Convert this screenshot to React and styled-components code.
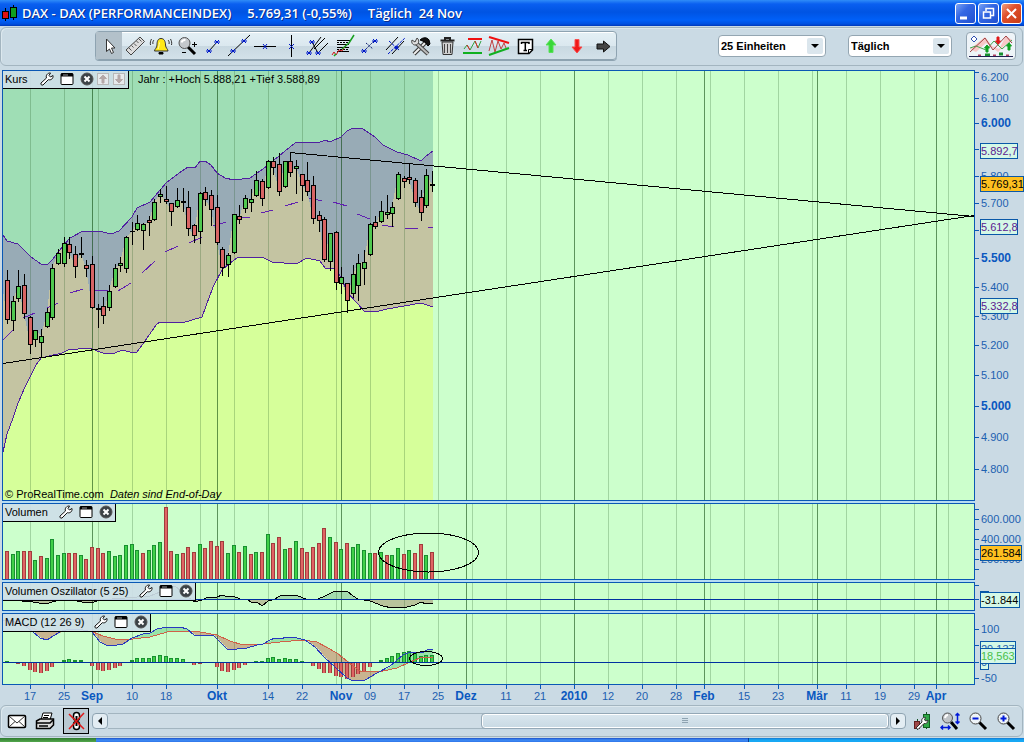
import React from "react";
import styled, { createGlobalStyle } from "styled-components";

/* ---------- data ---------- */

// one entry per trading day: [high, body top, body bottom, low, colour]
const candles = [
  [270, 280, 319, 323, "r"], [296, 301, 320, 330, "g"], [270, 286, 298, 301, "g"], [274, 285, 313, 318, "r"],
  [316, 317, 344, 353, "r"], [330, 330, 339, 346, "g"], [329, 336, 342, 357, "g"], [308, 312, 326, 327, "g"],
  [264, 268, 317, 319, "g"], [249, 253, 263, 264, "g"], [237, 243, 263, 266, "g"], [237, 244, 252, 258, "r"],
  [246, 254, 266, 277, "r"], [237, 253, 254, 257, "k"], [260, 265, 268, 276, "r"], [256, 264, 307, 308, "r"],
  [304, 308, 309, 327, "k"], [297, 306, 315, 323, "r"], [285, 291, 307, 310, "g"], [264, 268, 286, 287, "g"],
  [257, 263, 265, 271, "g"], [236, 237, 268, 272, "g"], [222, 231, 231, 244, "k"], [215, 223, 229, 230, "g"],
  [223, 224, 230, 249, "g"], [216, 220, 222, 235, "r"], [199, 202, 219, 220, "g"], [189, 194, 196, 202, "g"],
  [186, 199, 201, 203, "r"], [203, 203, 211, 225, "r"], [188, 200, 206, 207, "g"], [188, 201, 202, 211, "k"],
  [191, 207, 228, 235, "r"], [224, 225, 235, 242, "r"], [192, 193, 231, 243, "g"], [187, 192, 199, 205, "r"],
  [190, 195, 209, 225, "r"], [195, 207, 242, 244, "r"], [247, 249, 267, 275, "r"], [253, 255, 264, 276, "g"],
  [214, 214, 252, 253, "g"], [205, 216, 219, 223, "r"], [195, 198, 208, 212, "g"], [189, 199, 202, 211, "g"],
  [171, 180, 195, 196, "g"], [179, 181, 198, 205, "r"], [160, 161, 187, 188, "g"], [157, 161, 167, 174, "r"],
  [153, 164, 191, 195, "r"], [161, 161, 186, 187, "g"], [152, 161, 172, 176, "r"], [160, 166, 168, 193, "g"],
  [174, 174, 185, 200, "r"], [162, 180, 191, 195, "r"], [176, 185, 218, 223, "r"], [211, 215, 220, 231, "r"],
  [217, 219, 259, 261, "r"], [233, 233, 261, 270, "g"], [231, 232, 282, 289, "r"], [267, 277, 283, 293, "g"],
  [283, 283, 300, 312, "r"], [265, 274, 293, 297, "g"], [254, 263, 285, 300, "g"], [250, 262, 268, 284, "g"],
  [223, 224, 254, 255, "g"], [216, 222, 226, 228, "r"], [201, 211, 221, 222, "g"], [195, 212, 214, 218, "g"],
  [202, 207, 213, 226, "g"], [172, 174, 198, 199, "g"], [176, 178, 181, 187, "r"], [163, 177, 179, 183, "r"],
  [178, 180, 202, 206, "r"], [190, 197, 212, 220, "r"], [169, 175, 205, 207, "g"], [171, 184, 185, 191, "k"],
];

const upperBand = [
  [3, 235], [7, 241], [18, 244], [31, 257], [41, 264], [47, 265], [52, 260], [63, 246], [70, 238], [83, 231],
  [103, 232], [111, 234], [119, 231], [132, 217], [137, 208], [150, 202], [166, 183], [182, 171], [188, 167],
  [195, 168], [200, 161], [205, 161], [211, 165], [217, 173], [225, 178], [234, 180], [250, 178], [263, 169],
  [279, 156], [285, 151], [295, 143], [303, 142], [318, 143], [325, 140], [330, 142], [341, 137], [347, 131],
  [353, 128], [363, 129], [375, 137], [383, 145], [397, 152], [408, 155], [421, 161], [425, 157], [433, 151],
];

const lowerBand = [
  [3, 452], [7, 434], [13, 418], [18, 403], [25, 387], [30, 377], [36, 365], [41, 358], [62, 353], [68, 350],
  [89, 348], [103, 353], [115, 353], [122, 350], [130, 352], [137, 352], [145, 341], [156, 325], [160, 322],
  [182, 323], [202, 317], [213, 287], [222, 270], [230, 263], [237, 258], [262, 257], [272, 262], [296, 264],
  [307, 258], [320, 261], [325, 268], [335, 269], [341, 277], [347, 292], [357, 303], [364, 311], [375, 312],
  [387, 309], [421, 303], [433, 307],
];

const middleDashes = [
  [3, 340, 13, 330], [23, 318, 35, 313], [47, 308, 58, 303], [70, 293, 83, 289], [94, 290, 108, 291],
  [118, 291, 131, 283], [142, 273, 155, 261], [165, 252, 178, 246], [189, 243, 202, 237], [213, 226, 226, 222],
  [237, 217, 250, 217], [261, 213, 273, 210], [285, 206, 298, 202], [309, 198, 322, 201], [333, 202, 347, 206],
  [357, 214, 370, 219], [382, 225, 394, 227], [405, 228, 418, 229], [428, 227, 433, 227],
];

const volumeTops = [
  551, 554, 551, 551, 551, 560, 556, 558, 539, 555, 553, 553, 553, 555, 559, 547, 548, 553, 551, 556, 555, 545,
  544, 550, 553, 550, 545, 542, 507, 551, 554, 553, 547, 552, 544, 548, 541, 546, 541, 553, 545, 552, 546, 554,
  552, 552, 534, 543, 537, 549, 548, 541, 548, 552, 547, 543, 528, 537, 542, 549, 543, 547, 544, 550, 553, 553,
  552, 555, 555, 548, 554, 550, 553, 544, 555, 552,
];
const volumeColors =
  "rggrrgrggggrrgrrrrggggggrgggrrgrrrgrrrrggrgrgrgrrgrgrrrrrgrgrggggrgrggrgrrgr";

const macdBars = [
  1, -1, -2, -4, -8, -10, -11, -9, -5, -1, 2, 3, 2, 2, 0, -4, -8, -9, -8, -6, -4, 0, 2, 4, 4, 4, 6, 7, 6, 4, 4,
  3, 0, -3, -2, -1, -1, -5, -9, -10, -8, -6, -3, -1, 1, 1, 4, 5, 3, 4, 3, 3, 1, -1, -4, -7, -11, -11, -14, -15,
  -17, -15, -12, -10, -5, -1, 2, 4, 6, 9, 10, 11, 9, 6, 7, 7,
];

const macdLine = [
  [3, 620], [20, 622], [32, 631], [40, 638], [47, 640], [53, 636], [62, 631], [70, 629], [83, 630], [92, 632],
  [100, 642], [106, 645], [117, 645], [123, 644], [132, 638], [143, 634], [150, 633], [157, 629], [167, 627],
  [173, 628], [180, 627], [187, 629], [194, 635], [207, 635], [213, 635], [220, 642], [227, 649], [237, 649],
  [247, 648], [257, 645], [263, 644], [270, 640], [275, 638], [280, 639], [287, 637], [297, 638], [305, 640],
  [315, 647], [324, 657], [335, 667], [347, 678], [353, 681], [365, 680], [377, 673], [390, 666], [403, 655],
  [410, 652], [422, 653], [427, 650], [433, 649],
];

const signalLine = [
  [3, 620], [28, 626], [37, 630], [50, 632], [70, 631], [93, 632], [103, 636], [115, 639], [133, 639],
  [150, 637], [167, 632], [182, 631], [200, 632], [217, 635], [230, 641], [243, 645], [263, 644], [280, 642],
  [303, 640], [317, 642], [337, 653], [348, 662], [360, 671], [370, 671], [383, 671], [397, 668], [410, 662],
  [420, 658], [433, 657],
];

const oscillator = [
  [3, 600], [22, 601], [33, 602], [39, 603], [46, 604], [52, 602], [60, 600], [77, 601], [87, 603], [94, 602],
  [100, 600], [125, 598], [150, 596], [175, 586], [188, 597], [194, 602], [202, 600], [208, 597], [217, 597],
  [222, 595], [228, 597], [233, 596], [240, 599], [247, 599], [252, 603], [257, 602], [262, 606], [268, 601],
  [275, 599], [280, 596], [291, 595], [298, 596], [306, 599], [318, 599], [325, 596], [335, 591], [347, 591],
  [353, 596], [358, 599], [370, 601], [383, 606], [392, 608], [407, 607], [415, 605], [421, 602], [426, 604],
  [433, 603],
];

// time axis: x position, label, month start
const dates = [
  [30, "17"], [64, "25"], [92, "Sep", true], [98, ""], [132, "10"], [166, "18"], [200, ""], [217, "Okt", true],
  [234, ""], [268, "14"], [302, "22"], [336, ""], [341, "Nov", true], [370, "09"], [404, "17"], [438, "25"],
  [466, "Dez", true], [472, ""], [506, "11"], [540, "21"], [574, "2010", true], [608, "12"], [642, "20"],
  [676, "28"], [704, "Feb", true], [710, ""], [744, "15"], [778, "23"], [812, ""], [817, "Mär", true],
  [846, "11"], [880, "19"], [914, "29"], [936, "Apr", true], [948, ""],
];

const barX = (i) => Math.floor(30.2 + ((i - 4) * 17) / 3);
const points = (list) => list.map((p) => p.join(",")).join(" ");
const closes = candles.map(([, top, bottom, , c], i) => [barX(i), c === "r" ? bottom : top]);

const valueAt = (line, x) => {
  const i = line.findIndex((p) => p[0] >= x);
  if (i < 1) return line[i < 0 ? line.length - 1 : 0][1];
  const [x0, y0] = line[i - 1];
  const [x1, y1] = line[i];
  return y0 + ((y1 - y0) * (x - x0)) / (x1 - x0);
};

/* ---------- layout ---------- */

const GlobalStyle = createGlobalStyle`
  * {
    box-sizing: border-box;
  }

  body {
    margin: 0;
    background: #cadae4;
    font-family: "Liberation Sans", Arial, sans-serif;
    font-size: 11px;
    color: #000;
  }

  button, select {
    font: inherit;
    color: inherit;
    padding: 0;
    margin: 0;
  }
`;

const Page = styled.div`
  display: flex;
  flex-direction: column;
  overflow: hidden;
`;

const TitleBar = styled.header`
  height: 26px;
  display: flex;
  align-items: center;
  gap: 2px;
  padding: 0 2px;
  background: linear-gradient(#2f8cf8 0, #0a5ff0 4px, #0054e3 12px, #0060f8 20px, #0050e0 24px, #0038b8 26px);
`;

const Title = styled.h1`
  flex: 1;
  display: flex;
  gap: 16px;
  margin: 0 0 0 2px;
  font-family: "Open Sans", sans-serif;
  font-size: 13px;
  font-weight: 600;
  line-height: 16px;
  white-space: pre;
  color: #fff;
  text-shadow: 1px 1px 0 #0a2c8c;
`;

const WindowButton = styled.button`
  width: 21px;
  height: 21px;
  border: 1px solid #fff;
  border-radius: 3px;
  background: ${(props) =>
    props.$close
      ? "linear-gradient(135deg, #f0a080, #e0502c 40%, #c83c14)"
      : "linear-gradient(135deg, #7aa2f4, #3468e4 40%, #2050d0)"};

  svg {
    display: block;
  }
`;

const ToolBar = styled.div`
  height: 39px;
  margin: 1px 1px 4px 0;
  padding: 0 6px 2px 94px;
  display: flex;
  align-items: center;
  border: 1px solid #a3b5c0;
  border-radius: 6px;
  box-shadow: inset 1px 1px 0 #dce8ee;
`;

const ToolGroup = styled.div`
  display: flex;
  height: 29px;
  margin-right: auto;
  border: 1px solid #8ea3b1;
  border-radius: 4px;
  background: linear-gradient(#e4f0f5 0, #dbe8ef 50%, #c8d8e1 51%, #d3e1e9 100%);
  box-shadow: 0 1px 0 #8ea3b1, inset 1px 1px 0 #fff;
`;

const ToolButton = styled.button`
  width: 26px;
  border: none;
  display: grid;
  place-items: center;
  background: ${(props) => (props.$active ? "#b3c1ca" : "transparent")};
`;

const SelectBox = styled.label`
  position: relative;
  width: ${(props) => props.$width}px;
  margin-right: 22px;

  select {
    appearance: none;
    display: block;
    width: 100%;
    height: 22px;
    padding-left: 2px;
    border: 1px solid #94a6b2;
    border-radius: 4px;
    background: #fff;
    font-weight: bold;
    outline: none;
  }

  svg {
    position: absolute;
    right: 2px;
    top: 2px;
    pointer-events: none;
  }
`;

const IndicatorButton = styled.button`
  width: 50px;
  height: 28px;
  margin-left: -8px;
  border: 1px solid #94a6b2;
  border-radius: 4px;
  background: #eef4f8;
  display: grid;
  place-items: center;
`;

const Charts = styled.main`
  display: flex;
  flex-direction: column;
  gap: 2px;
  padding-left: 2px;
`;

const Panel = styled.section`
  display: grid;
  grid-template-columns: 1fr 49px;
`;

const Plot = styled.div`
  position: relative;
  border: 1px solid #0a58b4;
  background: #ccffcc;
  box-shadow: 0 2px 0 ${(props) => (props.$last ? "transparent" : "#b5dcf3")};
`;

const PlotSvg = styled.svg`
  display: block;
  width: 100%;
  height: ${(props) => props.$height}px;
`;

const AxisSvg = styled.svg`
  display: block;
  width: 49px;
  height: ${(props) => props.$height}px;
  overflow: visible;
`;

const TimeSvg = styled.svg`
  display: block;
  width: 100%;
  height: 20px;
  overflow: visible;
`;

const TimeAxis = styled.div`
  margin: -2px 50px 0 1px;
`;

const PanelTop = styled.div`
  position: absolute;
  top: 0;
  left: 0;
  display: flex;
  align-items: center;
  gap: 9px;
  line-height: 16px;
  white-space: pre;
`;

const PanelHead = styled.div`
  display: flex;
  align-items: center;
  width: ${(props) => props.$width}px;
  height: 18px;
  padding: 0 2px 1px;
  background: rgba(206, 222, 232, 0.92);
  border: solid #000;
  border-width: 0 1px 1px 0;
`;

const PanelTitle = styled.h2`
  flex: 1;
  margin: 0;
  font-size: 11px;
  font-weight: normal;
`;

const HeadButton = styled.button`
  width: 14px;
  height: 14px;
  margin-left: ${(props) => (props.$tight ? "2px" : "6px")};
  border: none;
  background: none;

  svg {
    display: block;
  }
`;

const HeadNote = styled.span`
  align-self: flex-start;
`;

const Credits = styled.p`
  position: absolute;
  left: 2px;
  bottom: 0;
  margin: 0;
  line-height: 12px;
  white-space: pre;
`;

const BottomBar = styled.footer`
  height: 32px;
  margin-right: 1px;
  padding: 0 6px;
  display: flex;
  align-items: center;
  border: 1px solid #a3b5c0;
  border-radius: 6px;
  box-shadow: inset 1px 1px 0 #dce8ee;
`;

const BarButton = styled.button`
  width: ${(props) => (props.$framed ? 26 : 20)}px;
  height: ${(props) => (props.$framed ? 26 : 20)}px;
  margin-right: ${(props) => (props.$framed ? 3 : 8)}px;
  display: grid;
  place-items: center;
  border: ${(props) => (props.$framed ? "1px solid #000" : "none")};
  background: ${(props) => (props.$framed ? "#b9c8d1" : "none")};

  &:last-child {
    margin-right: 0;
  }
`;

const ArrowButton = styled.button`
  width: 16px;
  height: 16px;
  border: 1px solid #8ea3b1;
  border-radius: 4px;
  background: #e3edf3;
  display: grid;
  place-items: center;
`;

const ScrollTrack = styled.div`
  flex: 1;
  height: 16px;
  display: flex;
  justify-content: flex-end;
  padding-right: 2px;
  border: solid #a3b5c0;
  border-width: 1px 0;
  background: #cfdde6;
`;

const ScrollThumb = styled.div`
  width: 52%;
  height: 14px;
  display: grid;
  place-items: center;
  border: 1px solid #fff;
  border-radius: 3px;
  outline: 1px solid #94a8b6;
  background: linear-gradient(#d9e6ee, #c9dae4);
`;

const BarTools = styled.div`
  display: flex;
  margin-left: 6px;
`;

const TaskStrip = styled.div`
  height: 4px;
  margin-top: 1px;
  display: flex;
  background: linear-gradient(#1c50c8 0, #3f8cf4 2px, #2f76ea 4px);
  justify-content: space-between;
`;

const StartEdge = styled.div`
  width: 96px;
  background: linear-gradient(#2f7a30, #53a84c);
`;

const TrayEdge = styled.div`
  width: 27%;
  border-left: 1px solid #0a3c90;
  background: linear-gradient(#1478d0, #18a8f4 2px);
`;

/* ---------- icons ---------- */

const Icon = ({ children, w = 24, h = 24 }) => (
  <svg width={w} height={h} viewBox={`0 0 ${w} ${h}`} fill="none" stroke="#000" aria-hidden="true">
    {children}
  </svg>
);

const Cross = ({ x, y }) => (
  <path d={`M${x - 2} ${y - 2}L${x + 2} ${y + 2}M${x - 2} ${y + 2}L${x + 2} ${y - 2}M${x - 3} ${y}H${x + 3}`} stroke="#0018c8" />
);

const tools = [
  ["Zeiger", <path d="M9.500 5V17.500L12.500 15L14.500 19.500L16.500 18.500L14.500 14H18Z" fill="#fff" stroke="#333" />],
  ["Lineal", (
    <>
      <path d="M3 16L17 3L21.500 7.500L8 21Z" fill="#ddd" stroke="#444" />
      <path d="M6 14l2.500 2.500M8.500 11.500l2 2M11 9.500l2.500 2.500M13.500 7l2 2M16 5l2.500 2.500" stroke="#555" />
    </>
  )],
  ["Alarm", (
    <>
      <path d="M12 4.500C8.500 4.500 8 8 8 11C8 14 5.500 15 5.500 17H19C19 15 16.500 14 16.500 11C16.500 8 15.500 4.500 12 4.500Z" fill="#ffe818" stroke="#333" />
      <path d="M10.500 8.500C10 11 10 13 9 15" stroke="#fffcc0" />
      <path d="M5 6C4 7 3.500 8.500 4 10M2.500 5C1.500 7 1 8.500 1.500 11M19 6C20 7 20.500 8.500 20 10M21.500 5C22.500 7 23 8.500 22.500 11" stroke="#333" />
      <path d="M10 18.500H14V20H10Z" fill="#000" />
    </>
  )],
  ["Lupe", (
    <>
      <path d="M13 13L20 20" strokeWidth="3" />
      <circle cx="9.500" cy="9" r="5.500" fill="#c4c8cc" stroke="#555" />
      <path d="M6.500 8.500Q7.500 5.500 10.500 6" stroke="#fff" strokeWidth="2" />
      <path d="M17 10.500H22M19.500 8V13M7 18.500H11" />
    </>
  )],
  ["Segment", <><path d="M8 17L16 8" /><Cross x={8} y={17} /><Cross x={16} y={8} /></>],
  ["Gerade", <><path d="M1 22L23 1" /><Cross x={6} y={17} /><Cross x={17} y={7} /></>],
  ["Horizontale", <><path d="M1 12.500H23" /><path d="M10 10L14 15M14 10L10 15" stroke="#0018c8" /></>],
  ["Vertikale", <><path d="M12.500 1V23" /><path d="M10 10L15 15M15 10L10 15" stroke="#0018c8" /></>],
  ["Pitchfork", (
    <>
      <path d="M4 19L16 3M9 15L20 4M13 19L23 9M7 8L13 19" />
      <Cross x={4} y={19} /><Cross x={13} y={19} /><Cross x={7} y={8} />
    </>
  )],
  ["Fibonacci", (
    <>
      <path d="M6 6.500H20M6 10.500H18M6 13.500H18M6 17.500H18" strokeWidth="1" />
      <path d="M6 8.500H17M6 15.500H17" strokeDasharray="2 1" />
      <path d="M1 21L3 18L5 21L8 16L11 17L15 11" stroke="#d01818" />
      <path d="M3 22L5 20M11 15L18 9L23 1" stroke="#18a020" strokeWidth="1.500" />
    </>
  )],
  ["Fächer", (
    <>
      <path d="M7 17L18 6M9 9L16 15" strokeDasharray="2 1" stroke="#102070" />
      <Cross x={7} y={17} /><Cross x={18} y={7} />
    </>
  )],
  ["Kanal", (
    <>
      <path d="M3 16L15 3M9 20L21 7" />
      <path d="M5 20L22 4M6 7L16 16" stroke="#0018c8" strokeDasharray="3 1" />
      <circle cx="13.500" cy="13.500" r="1.500" fill="#0018c8" stroke="#0018c8" />
    </>
  )],
  ["Werkzeug", (
    <>
      <path d="M5 20L17 8" stroke="#333" strokeWidth="4" />
      <path d="M5 20L16 9" stroke="#eee" strokeWidth="2" />
      <path d="M11 6C14 3 18 3 20 6L21 10L19 12L16 8Z" fill="#111" />
      <path d="M6 8L19 20" stroke="#444" strokeWidth="4" />
      <path d="M6 8L19 20" stroke="#bbb" strokeWidth="2" />
      <path d="M3 6L6 8L8 4C11 6 10 11 6 11C4 11 2 9 3 6Z" fill="#ddd" stroke="#444" />
    </>
  )],
  ["Löschen", (
    <>
      <path d="M7 8H18L17 20.500H8Z" fill="#d0d0d0" stroke="#333" />
      <path d="M5.500 6.500H19.500M10 6V4H15V6" stroke="#222" strokeWidth="2" />
      <path d="M9.500 10V19M12.500 10V19M15.500 10V19" stroke="#444" />
    </>
  )],
  ["Unterstützung", (
    <>
      <path d="M3 15L6 11L9 16L14 7L17 14L20 7" stroke="#30a040" />
      <path d="M6 11L9 16M14 7L17 14" stroke="#e02020" />
      <path d="M7 5H21" stroke="#f01010" strokeWidth="2" />
      <path d="M2 19H21" stroke="#10b020" strokeWidth="2" />
    </>
  )],
  ["Dreieck", (
    <>
      <path d="M2 17L5 6L8 18L11 7L14 15L17 9L19 14" stroke="#c04040" />
      <path d="M2 3L22 9" stroke="#f01010" strokeWidth="2" />
      <path d="M2 21L22 14" stroke="#10b020" strokeWidth="2" />
    </>
  )],
  ["Text", (
    <>
      <path d="M5.500 5.500H19.500V16L16 19.500H5.500Z" fill="#fff" strokeWidth="1.500" />
      <path d="M8.500 10V8.500H16V10M12.300 8.500V16M10.500 16.500H14" strokeWidth="1.500" />
      <path d="M19 15.500H15.500V19" />
    </>
  )],
  ["Pfeil hoch", <path d="M12 5L17 11H14V18.500H10V11H7Z" fill="#38d838" stroke="#58e058" />],
  ["Pfeil runter", <path d="M12 19L17 13H14V5.500H10V13H7Z" fill="#f01818" stroke="#f85050" />],
  ["Pfeil rechts", <path d="M19 12.500L12.500 7V10H6V15H12.500V18Z" fill="#444" stroke="#111" />],
];

const Wrench = () => (
  <Icon w={14} h={14}>
    <path d="M1 11L6.500 6C5.500 3.500 7.500 0.800 10.500 1L9 3.500L10.500 5L13 3.500C13.500 6.500 11 8.500 8.300 7.700L3 13C1.500 13.500 0.500 12.500 1 11Z" fill="#fff" stroke="#111" />
  </Icon>
);

const WindowIcon = () => (
  <Icon w={14} h={14}>
    <rect x="1" y="1.500" width="12" height="11" rx="1" fill="#fff" />
    <path d="M1 3H13" strokeWidth="3" />
    <path d="M3 3H8" stroke="#999" />
  </Icon>
);

const CloseIcon = () => (
  <Icon w={14} h={14}>
    <circle cx="7" cy="7" r="6" fill="#3c4246" stroke="#555" />
    <path d="M4.500 4.500L9.500 9.500M9.500 4.500L4.500 9.500" stroke="#fff" strokeWidth="2" />
  </Icon>
);

const MoveIcon = ({ down }) => (
  <Icon w={14} h={14}>
    <rect x="1.500" y="1.500" width="11" height="11" fill="#e6eaec" stroke="#b8b8b8" />
    <path d={down ? "M7 11L3.500 7.500H6V3H8V7.500H10.500Z" : "M7 3L3.500 6.500H6V11H8V6.500H10.500Z"} fill="#b4a8a8" stroke="#b4a8a8" />
  </Icon>
);

const DropArrow = () => (
  <svg width="18" height="18" viewBox="0 0 18 18" aria-hidden="true">
    <rect x="1" y="1" width="16" height="16" rx="2" fill="#dbe6ed" />
    <path d="M5 7H13L9 11Z" fill="#000" />
  </svg>
);

/* ---------- chart parts ---------- */

const Grid = ({ top, height }) =>
  dates.map(([x, , major]) => (
    <rect key={x} x={x} y={top} width="1" height={height} fill={major ? "#003c00" : "#205820"} fillOpacity={major ? 0.55 : 0.25} />
  ));

const ChartPlot = ({ top, height, label, children }) => (
  <PlotSvg
    $height={height}
    viewBox={`3 ${top} 971 ${height}`}
    preserveAspectRatio="none"
    shapeRendering="crispEdges"
    role="img"
    aria-label={label}
  >
    {children}
  </PlotSvg>
);

const Axis = ({ top, height, ticks, labels }) => (
  <AxisSvg $height={height}>
    {ticks.map((y) => (
      <rect key={y} x="0" y={y - top} width="4" height="1" fill="#0a58b4" />
    ))}
    {labels.map(({ y, text, bold, width, fill = "#d5f8e6", color = "#1c60b0" }) => (
      <g key={text}>
        {width && (
          <rect x="5.500" y={y - top - 7.500} width={width} height="15" fill={fill} stroke="#0a58a8" shapeRendering="crispEdges" />
        )}
        <text
          x="6"
          y={y - top + 4}
          fontSize={bold ? 12 : 11}
          fontWeight={bold ? "bold" : "normal"}
          fill={bold ? "#0a58c0" : color}
        >
          {text}
        </text>
      </g>
    ))}
  </AxisSvg>
);

const Head = ({ title, width, movable }) => (
  <PanelHead $width={width}>
    <PanelTitle>{title}</PanelTitle>
    <HeadButton aria-label="Einstellungen"><Wrench /></HeadButton>
    <HeadButton aria-label="Fenster"><WindowIcon /></HeadButton>
    <HeadButton aria-label="Schließen"><CloseIcon /></HeadButton>
    {movable && (
      <>
        <HeadButton $tight aria-label="Nach oben"><MoveIcon /></HeadButton>
        <HeadButton $tight aria-label="Nach unten"><MoveIcon down /></HeadButton>
      </>
    )}
  </PanelHead>
);

const candleFill = { r: "#d86464", g: "#50c850", k: "#000" };

const Candle = ({ x, data: [high, top, bottom, low, c] }) => (
  <g>
    <rect x={x} y={high} width="1" height={low - high + 1} fill="#000" />
    <rect x={x - 2} y={top} width="5" height={Math.max(bottom - top + 1, 1)} fill="#000" />
    {bottom - top > 1 && <rect x={x - 1} y={top + 1} width="3" height={bottom - top - 1} fill={candleFill[c]} />}
  </g>
);

const Bar = ({ x, y, height, color }) => (
  <g>
    <rect x={x - 2} y={y} width="4" height={height} fill={color === "r" ? "#a03c3c" : "#189030"} />
    {height > 2 && (
      <rect x={x - 1} y={y + 1} width="2" height={height - 1} fill={color === "r" ? "#e06464" : "#40d048"} />
    )}
  </g>
);

const PriceChart = () => (
  <ChartPlot top={71} height={429} label="Kurs">
    <rect x="3" y="71" width="430" height="429" fill="#d6ff9a" />
    <polygon points={`3,71 ${points(upperBand)} 433,71`} fill="#9fdeb5" />
    <polygon points={points([...upperBand, ...[...lowerBand].reverse()])} fill="#98abb6" />
    <polygon points={points([[3, 290], ...closes, [433, 184], ...[...lowerBand].reverse()])} fill="#c4c4a2" />
    <Grid top={71} height={429} />
    <polyline points={points(upperBand)} fill="none" stroke="#5020a0" />
    <polyline points={points(lowerBand)} fill="none" stroke="#5020a0" />
    {middleDashes.map(([x1, y1, x2, y2]) => (
      <line key={x1} x1={x1} y1={y1} x2={x2} y2={y2} stroke="#6020b0" />
    ))}
    {candles.map((data, i) => (
      <Candle key={i} x={barX(i)} data={data} />
    ))}
    <path d="M3 363.500L974 215.500M290 152.500L974 216.500" stroke="#000" fill="none" />
  </ChartPlot>
);

const VolumeChart = () => (
  <ChartPlot top={504} height={75} label="Volumen">
    <Grid top={504} height={75} />
    {volumeTops.map((y, i) => (
      <Bar key={i} x={barX(i)} y={y} height={579 - y} color={volumeColors[i]} />
    ))}
    <ellipse cx="428.500" cy="552.500" rx="50" ry="19.500" fill="none" stroke="#000" />
  </ChartPlot>
);

const OscillatorChart = () => (
  <ChartPlot top={583} height={27} label="Volumen Oszillator">
    <defs>
      <clipPath id="above"><rect x="3" y="583" width="971" height="16" /></clipPath>
      <clipPath id="below"><rect x="3" y="599" width="971" height="11" /></clipPath>
    </defs>
    <polygon points={`3,599 ${points(oscillator)} 433,599`} fill="#a4dcae" clipPath="url(#above)" />
    <polygon points={`3,599 ${points(oscillator)} 433,599`} fill="#b8c49c" clipPath="url(#below)" />
    <Grid top={583} height={27} />
    <polyline points={points(oscillator)} fill="none" stroke="#000" />
    <rect x="3" y="599" width="971" height="1" fill="#0030a0" />
  </ChartPlot>
);

const MacdChart = () => (
  <ChartPlot top={614} height={70} label="MACD">
    {Array.from({ length: 215 }, (_, i) => 3 + i * 2).map((x) => {
      const macd = valueAt(macdLine, x);
      const signal = valueAt(signalLine, x);
      return (
        <rect
          key={x}
          x={x}
          y={Math.min(macd, signal)}
          width="2"
          height={Math.abs(macd - signal)}
          fill={macd > signal ? "#c8b490" : "#98e4a8"}
        />
      );
    })}
    <Grid top={614} height={70} />
    {macdBars.map(
      (v, i) => v !== 0 && (
        <Bar key={i} x={barX(i)} y={v > 0 ? 662 - v : 662} height={Math.abs(v)} color={v > 0 ? "g" : "r"} />
      )
    )}
    <polyline points={points(signalLine)} fill="none" stroke="#d06048" />
    <polyline points={points(macdLine)} fill="none" stroke="#2838c0" />
    <rect x="3" y="662" width="971" height="1" fill="#0030a0" />
    <ellipse cx="426" cy="658.500" rx="16.500" ry="7" fill="none" stroke="#000" />
  </ChartPlot>
);

const purple = "#5c2090";

const priceLabels = [
  { y: 77, text: "6.200" }, { y: 98, text: "6.100" }, { y: 123, text: "6.000", bold: true },
  { y: 151, text: "5.892,7", width: 37, color: purple },
  { y: 176, text: "5.800" },
  { y: 184, text: "5.769,31", width: 43, fill: "#ffc020", color: "#000" },
  { y: 203, text: "5.700" },
  { y: 227, text: "5.612,8", width: 37, color: purple },
  { y: 258, text: "5.500", bold: true }, { y: 287, text: "5.400" }, { y: 316, text: "5.300" },
  { y: 306, text: "5.332,8", width: 37, color: purple },
  { y: 345, text: "5.200" }, { y: 375, text: "5.100" }, { y: 406, text: "5.000", bold: true },
  { y: 437, text: "4.900" }, { y: 469, text: "4.800" },
];

const App = () => (
  <Page>
    <GlobalStyle />
    <TitleBar>
      <Icon w={16} h={18}>
        <path d="M3.500 4V17M11.500 1V16" />
        <rect x="0.500" y="7.500" width="6" height="7" fill="#e01010" />
        <rect x="8.500" y="3.500" width="6" height="10" fill="#10a020" />
      </Icon>
      <Title>
        <span>DAX - DAX (PERFORMANCEINDEX)</span>
        <span>5.769,31 (-0,55%)</span>
        <span>Täglich  24 Nov</span>
      </Title>
      <WindowButton aria-label="Minimieren">
        <Icon w={19} h={19}><path d="M4 14H11" stroke="#fff" strokeWidth="3" /></Icon>
      </WindowButton>
      <WindowButton aria-label="Wiederherstellen">
        <Icon w={19} h={19}>
          <path d="M7 7V4.500H14.500V11.500H12" stroke="#fff" strokeWidth="1.500" />
          <rect x="4.500" y="8" width="7" height="6" stroke="#fff" strokeWidth="1.500" />
        </Icon>
      </WindowButton>
      <WindowButton $close aria-label="Schließen">
        <Icon w={19} h={19}><path d="M5 5L14 14M14 5L5 14" stroke="#fff" strokeWidth="2" /></Icon>
      </WindowButton>
    </TitleBar>

    <ToolBar>
      <ToolGroup>
        {tools.map(([name, drawing], i) => (
          <ToolButton key={name} $active={i === 0} aria-label={name}>
            <Icon>{drawing}</Icon>
          </ToolButton>
        ))}
      </ToolGroup>
      <SelectBox $width={108}>
        <select aria-label="Einheiten" defaultValue="25">
          <option value="25">25 Einheiten</option>
        </select>
        <DropArrow />
      </SelectBox>
      <SelectBox $width={104}>
        <select aria-label="Zeitraum" defaultValue="d">
          <option value="d">Täglich</option>
        </select>
        <DropArrow />
      </SelectBox>
      <IndicatorButton aria-label="Indikatoren">
        <Icon w={46} h={24}>
          <path d="M2 15L17 3L24 12L31 15L38 2L44 6L36 12L30 18L18 9L8 18Z" fill="#f8c8c8" stroke="none" />
          <path d="M2 14L8 12L18 16L26 7L34 15L44 6" stroke="#40a850" />
          <path d="M2 18L17 4L25 16L38 2L44 9" stroke="#a04040" />
          <path d="M6 2L9 5L6 8L3 5Z" fill="#fff" stroke="#3050b0" />
          <path d="M19 11L21.500 14H20V18H18V14H16.500ZM41 9L43.500 12H42V16H40V12H38.500Z" fill="#10a020" stroke="#10a020" />
          <path d="M30 10L32.500 7H31V3H29V7H27.500Z" fill="#e01818" stroke="#e01818" />
          <path d="M10 21.500H13M25 21.500H28M38 21.500H41" stroke="#b04060" strokeWidth="2" />
          <path d="M17 21H22M31 20H35" stroke="#189030" strokeWidth="3" />
          <path d="M1 22.500H45" stroke="#202050" />
        </Icon>
      </IndicatorButton>
    </ToolBar>

    <Charts>
      <Panel>
        <Plot>
          <PriceChart />
          <PanelTop>
            <Head title="Kurs" width={126} movable />
            <HeadNote>Jahr : +Hoch 5.888,21 +Tief 3.588,89</HeadNote>
          </PanelTop>
          <Credits>
            © ProRealTime.com  <i>Daten sind End-of-Day</i>
          </Credits>
        </Plot>
        <Axis
          top={70}
          height={431}
          ticks={[72, 98, 123, 149, 176, 203, 230, 258, 287, 316, 345, 375, 406, 437, 469]}
          labels={priceLabels}
        />
      </Panel>
      <Panel>
        <Plot>
          <VolumeChart />
          <PanelTop><Head title="Volumen" width={113} /></PanelTop>
        </Plot>
        <Axis
          top={503}
          height={77}
          ticks={[509, 519, 529, 539, 549, 559, 569]}
          labels={[
            { y: 519, text: "600.000" }, { y: 539, text: "400.000" }, { y: 559, text: "200.000" },
            { y: 553, text: "261.584", width: 41, fill: "#ffc020", color: "#000" },
          ]}
        />
      </Panel>
      <Panel>
        <Plot>
          <OscillatorChart />
          <PanelTop><Head title="Volumen Oszillator (5 25)" width={193} /></PanelTop>
        </Plot>
        <Axis
          top={582}
          height={29}
          ticks={[585, 599]}
          labels={[
            { y: 599, text: "0", width: 8 },
            { y: 600, text: "-31.844", width: 39, color: "#000" },
          ]}
        />
      </Panel>
      <Panel>
        <Plot $last>
          <MacdChart />
          <PanelTop><Head title="MACD (12 26 9)" width={148} /></PanelTop>
        </Plot>
        <Axis
          top={613}
          height={72}
          ticks={[629, 645, 662, 678]}
          labels={[
            { y: 629, text: "100" },
            { y: 662, text: "0", width: 8 },
            { y: 649, text: "29,137", width: 35 },
            { y: 656, text: "18,563", width: 35, color: "#48c048" },
            { y: 678, text: "-50" },
          ]}
        />
      </Panel>
      <TimeAxis>
        <TimeSvg>
          {dates.filter(([, text]) => text).map(([x, text, major]) => {
            const left = `${((x - 3) / 971) * 100}%`;
            return (
              <g key={x}>
                <rect x={left} y="0" width="1" height="4" fill="#0a58b4" />
                <text
                  x={left}
                  y="15"
                  textAnchor="middle"
                  fontSize={major ? 12 : 11}
                  fontWeight={major ? "bold" : "normal"}
                  fill={major ? "#0a58c0" : "#1c60b0"}
                >
                  {text}
                </text>
              </g>
            );
          })}
        </TimeSvg>
      </TimeAxis>
    </Charts>

    <BottomBar>
      <BarButton aria-label="E-Mail">
        <Icon w={20} h={20}>
          <rect x="1.500" y="4.500" width="17" height="12" rx="1" fill="#fff" strokeWidth="1.500" />
          <path d="M2 5L10 12L18 5M2 16L8 10.500M18 16L12 10.500" stroke="#333" />
        </Icon>
      </BarButton>
      <BarButton aria-label="Drucken">
        <Icon w={20} h={20}>
          <path d="M6 9L8 2H17L15 9Z" fill="#fff" />
          <path d="M9 4.500H14M8 6.500H13" />
          <path d="M1.500 10L5 8H18.500V14L15 17.500H1.500Z" fill="#ddd" strokeWidth="1.500" />
          <path d="M2 12H15L18 9M4 15H13" strokeWidth="1.500" />
        </Icon>
      </BarButton>
      <BarButton $framed aria-label="Verknüpfung aufheben">
        <Icon w={20} h={20}>
          <rect x="7.500" y="1.500" width="6" height="8" rx="3" fill="#fff" strokeWidth="1.500" />
          <rect x="7.500" y="10.500" width="6" height="8" rx="3" fill="#fff" strokeWidth="1.500" />
          <path d="M10.500 5V15" strokeWidth="2" />
          <path d="M3 3L18 18M18 2L3 18" stroke="#e01818" strokeWidth="1.500" />
        </Icon>
      </BarButton>
      <ArrowButton aria-label="Zurück">
        <Icon w={8} h={8}><path d="M6 0V8L2 4Z" fill="#000" stroke="none" /></Icon>
      </ArrowButton>
      <ScrollTrack role="scrollbar" aria-label="Zeitachse" aria-controls="root" aria-valuenow={100}>
        <ScrollThumb>
          <Icon w={6} h={8}><path d="M0 1.500H6M0 3.500H6M0 5.500H6" stroke="#8ea3b1" /></Icon>
        </ScrollThumb>
      </ScrollTrack>
      <ArrowButton aria-label="Vor">
        <Icon w={8} h={8}><path d="M2 0V8L6 4Z" fill="#000" stroke="none" /></Icon>
      </ArrowButton>
      <BarTools>
        <BarButton aria-label="Darstellung">
          <Icon w={20} h={20}>
            <path d="M5.500 8V19M14.500 1V18" stroke="#105020" />
            <rect x="2.500" y="10.500" width="5" height="7" fill="#a04848" stroke="#602020" />
            <rect x="11.500" y="3.500" width="6" height="13" fill="#30a848" stroke="#106020" />
            <path d="M4 17L10 11C9 8 11 6 13.500 6.500L12.500 9L14 10L16 9C16 12 14 13 12 12.500L6 18.500Z" fill="#fff" stroke="#333" />
          </Icon>
        </BarButton>
        <BarButton aria-label="Zoom anpassen">
          <Icon w={20} h={20}>
            <path d="M11 11L17 18" strokeWidth="3" />
            <circle cx="7.500" cy="7" r="5" fill="#c0c4c8" stroke="#555" />
            <path d="M5 7Q5.500 4 8 4" stroke="#fff" strokeWidth="2" />
            <path d="M17.500 3V12M15.500 4.500L17.500 2.500L19.500 4.500M15.500 10.500L17.500 12.500L19.500 10.500M1 16.500H10M3 14.500L1 16.500L3 18.500M8 14.500L10 16.500L8 18.500" stroke="#0018d8" strokeWidth="1.500" />
          </Icon>
        </BarButton>
        <BarButton aria-label="Verkleinern">
          <Icon w={20} h={20}>
            <path d="M11 11L18 18" strokeWidth="3" />
            <circle cx="7.500" cy="7.500" r="5.500" fill="#eef4f8" stroke="#444" />
            <path d="M4.500 7.500H10.500" stroke="#0018d8" strokeWidth="2" />
          </Icon>
        </BarButton>
        <BarButton aria-label="Vergrößern">
          <Icon w={20} h={20}>
            <path d="M11 11L18 18" strokeWidth="3" />
            <circle cx="7.500" cy="7.500" r="5.500" fill="#eef4f8" stroke="#444" />
            <path d="M4.500 7.500H10.500M7.500 4.500V10.500" stroke="#0018d8" strokeWidth="2" />
          </Icon>
        </BarButton>
      </BarTools>
    </BottomBar>
    <TaskStrip>
      <StartEdge />
      <TrayEdge />
    </TaskStrip>
  </Page>
);

export default App;
